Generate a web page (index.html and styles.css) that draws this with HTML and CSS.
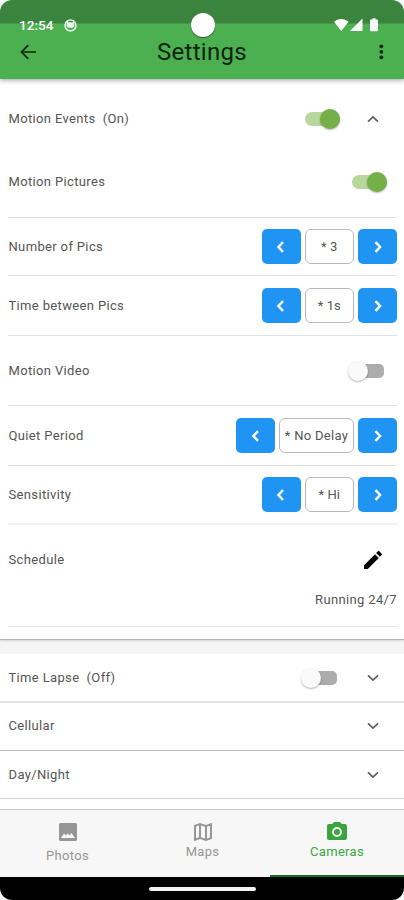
FILE: index.html
```
<!DOCTYPE html>
<html lang="en">
<head>
<meta charset="utf-8">
<title>Settings</title>
<link rel="stylesheet" href="styles.css">
</head>
<body>
<svg class="defs" width="0" height="0">
  <symbol id="left" viewBox="0 0 12 12"><path d="M8 1.200 3.400 6 8 10.800" fill="none" stroke="currentColor" stroke-width="2.400"/></symbol>
  <symbol id="right" viewBox="0 0 12 12"><path d="M3.500 1.200 8.100 6 3.500 10.800" fill="none" stroke="currentColor" stroke-width="2.400"/></symbol>
  <symbol id="down" viewBox="0 0 12 8"><path d="M1 1.300 6 6.100l5-4.800" fill="none" stroke="currentColor" stroke-width="1.600"/></symbol>
  <symbol id="up" viewBox="0 0 12 8"><path d="M1 6.700 6 1.900l5 4.800" fill="none" stroke="currentColor" stroke-width="1.600"/></symbol>
</svg>
<div class="phone">
  <header class="header">
    <div class="status">
      <div class="status-left">
        <span class="clock">12:54</span>
        <svg width="13" height="13" viewBox="0 0 13 13"><circle cx="6.500" cy="6.500" r="5.500" fill="none" stroke="#e6f4e7" stroke-width="1.500"/><path d="M2.600 2l2 1.300h3.800l2-1.300v4.500a3.900 2.300 0 0 1-7.800 0z" fill="#e6f4e7"/></svg>
      </div>
      <span class="punch"></span>
      <svg class="signals" width="44" height="14" viewBox="0 0 44 14" fill="#fff"><path d="M0 3.800C4-.1 10.500-.1 14.500 3.800L7.300 13z"/><path d="M28.500.500V13H16z"/><path d="M37 1.500h1.500V.300h3v1.200H43q1 0 1 1V12q0 1.300-1.300 1.300h-5.400Q36 13.300 36 12V2.500q0-1 1-1z"/></svg>
    </div>
    <div class="bar">
      <svg width="16" height="16" viewBox="0 0 16 16" fill="none" stroke="#0c250e" stroke-width="1.700"><path d="M8.300 1.200 1.500 8l6.800 6.800"/><path d="M16 8H1.800" stroke-width="1.400"/></svg>
      <h1 class="title">Settings</h1>
      <svg width="16" height="16" viewBox="0 0 16 16" fill="#0c250e"><circle cx="9.300" cy="2.300" r="1.900"/><circle cx="9.300" cy="7.800" r="1.900"/><circle cx="9.300" cy="13.300" r="1.900"/></svg>
    </div>
  </header>

  <main class="content">
    <section class="panel">
      <div class="row events"><span class="label">Motion Events &nbsp;(On)</span><span class="switch on"></span><svg class="chev"><use href="#up"/></svg></div>
      <div class="row pictures"><span class="label">Motion Pictures</span><span class="switch on"></span></div>
      <div class="row number"><span class="label">Number of Pics</span>
        <div class="stepper"><button class="step"><svg><use href="#left"/></svg></button><span class="value">* 3</span><button class="step"><svg><use href="#right"/></svg></button></div></div>
      <div class="row"><span class="label">Time between Pics</span>
        <div class="stepper"><button class="step"><svg><use href="#left"/></svg></button><span class="value">* 1s</span><button class="step"><svg><use href="#right"/></svg></button></div></div>
      <div class="row video"><span class="label">Motion Video</span><span class="switch"></span></div>
      <div class="row"><span class="label">Quiet Period</span>
        <div class="stepper"><button class="step"><svg><use href="#left"/></svg></button><span class="value wide">* No Delay</span><button class="step"><svg><use href="#right"/></svg></button></div></div>
      <div class="row sensitivity"><span class="label">Sensitivity</span>
        <div class="stepper"><button class="step"><svg><use href="#left"/></svg></button><span class="value">* Hi</span><button class="step"><svg><use href="#right"/></svg></button></div></div>
      <div class="schedule">
        <div class="schedule-head"><span class="label">Schedule</span>
          <svg class="pencil" viewBox="3 3 18 18"><path d="M3 17.250V21h3.750L17.810 9.940l-3.750-3.750L3 17.250zM20.710 7.040a1 1 0 0 0 0-1.410l-2.340-2.340a1 1 0 0 0-1.410 0l-1.830 1.830 3.750 3.750 1.830-1.830z"/></svg></div>
        <div class="running">Running 24/7</div>
      </div>
    </section>

    <section class="groups">
      <div class="group lapse"><span class="label">Time Lapse &nbsp;(Off)</span><span class="switch"></span><svg class="chev"><use href="#down"/></svg></div>
      <div class="group cellular"><span class="label">Cellular</span><svg class="chev"><use href="#down"/></svg></div>
      <div class="group daynight"><span class="label">Day/Night</span><svg class="chev"><use href="#down"/></svg></div>
    </section>
  </main>

  <nav class="tabs">
    <div class="tab photos">
      <svg width="18" height="18" viewBox="3 3 18 18"><path fill="currentColor" d="M21 19.500V4.500A1.500 1.500 0 0 0 19.500 3h-15A1.500 1.500 0 0 0 3 4.500v15A1.500 1.500 0 0 0 4.500 21h15a1.500 1.500 0 0 0 1.500-1.500zM5 18l3-4.500 2 2 1.800-2.300 1.700 2.300 2-2.500L19 18z"/></svg>
      <span>Photos</span></div>
    <div class="tab">
      <svg width="18" height="18" viewBox="3 3 18 18"><path fill="currentColor" d="M20.500 3l-.16.030L15 5.100 9 3 3.360 4.900a.5.5 0 0 0-.36.480V20.500a.5.5 0 0 0 .66.470L9 18.900l6 2.100 5.640-1.900a.5.5 0 0 0 .36-.480V3.500a.5.5 0 0 0-.5-.5zM10 5.470l4 1.400v11.660l-4-1.400V5.470zM5 6.460l3-1.010v11.700l-3 1.160V6.460zm14 11.080l-3 1.010V6.860l3-1.160v11.840z"/></svg>
      <span>Maps</span></div>
    <div class="tab active">
      <svg width="20" height="18" viewBox="2 2 20 18"><path fill="currentColor" d="M9 2L7.170 4H4a2 2 0 0 0-2 2v12c0 1.100.9 2 2 2h16a2 2 0 0 0 2-2V6a2 2 0 0 0-2-2h-3.170L15 2H9zm3 15a5 5 0 1 1 0-10 5 5 0 0 1 0 10z"/><circle cx="12" cy="12" r="3" fill="currentColor"/></svg>
      <span>Cameras</span></div>
  </nav>
  <footer class="system"><span class="handle"></span></footer>
</div>
</body>
</html>
```
FILE: styles.css
```
* { box-sizing: border-box; }
body { margin: 0; background: #fff; font-family: Roboto, "Liberation Sans", sans-serif; color: #555; }
.defs { position: absolute; }
.phone { width: 404px; height: 900px; display: flex; flex-direction: column; overflow: hidden; border-radius: 12px; background: #fff; }
.phone svg { display: block; flex: none; }

.header { position: relative; z-index: 1; height: 79px; flex: none; background: linear-gradient(#3b843d 0 23px, #4caf50 24px); box-shadow: 0 1px 5px rgba(0,0,0,.4); }
.status { height: 38px; padding: 11px 26px 0 19px; display: grid; grid-template-columns: 172px 24px 1fr; align-items: center; }
.status-left { display: flex; align-items: center; gap: 10px; padding-top: 1px; }
.clock { color: #fff; font-size: 13.6px; font-weight: 500; line-height: 24px; }
.punch { width: 24px; height: 24px; border-radius: 50%; background: #fff; box-shadow: 0 1px 1px rgba(0,0,0,.5); }
.signals { justify-self: end; }
.bar { height: 28px; padding: 0 16px 0 20px; display: flex; align-items: center; justify-content: space-between; }
.title { margin: 0; padding-right: 4px; color: #0c250e; font-size: 24px; line-height: 28px; font-weight: 400; letter-spacing: .3px; }

.content { height: 730px; flex: none; display: flex; flex-direction: column; background: #f5f5f5; gap: 14px; }
.panel { height: 561px; flex: none; background: #fff; padding: 0 7px 0 8px; border-bottom: 1px solid #b5b5b5; box-shadow: 0 1px 2px rgba(0,0,0,.12); }
.row { height: 60px; display: flex; align-items: center; justify-content: space-between; border-bottom: 1px solid #e0e0e0; }
.label, .running, .value { font-size: 13px; line-height: 18px; letter-spacing: .35px; white-space: pre; }
.label { padding-left: .5px; }
.events { height: 68px; padding: 11px 18px 0 0; border: 0; }
.events .switch { margin-left: auto; margin-right: 27px; }
.lapse .switch { margin-left: auto; margin-right: 30px; }
.pictures { height: 71px; padding-right: 10px; }
.number { height: 58px; }
.video { height: 70px; padding-right: 13px; }
.sensitivity { height: 59px; border-bottom: 2px solid #f1f1f1; }
.switch { width: 35px; height: 14px; display: flex; align-items: center; background: #acacac; border-radius: 10px 7px 7px 10px; }
.switch::before { content: ""; width: 20px; height: 20px; flex: none; margin-left: -1px; border-radius: 50%; background: #fafafa; box-shadow: 0 1px 2px rgba(0,0,0,.3); }
.switch.on { justify-content: flex-end; background: #b7d79c; border-radius: 7px; }
.switch.on::before { background: #75af48; }
.chev { width: 12px; height: 8px; color: #5c5c5c; }

.stepper { display: flex; gap: 4px; }
.step { width: 39px; height: 35px; padding: 0; border: 0; border-radius: 5px; background: #2094f3; color: #fff; display: grid; place-items: center; }
.step svg { width: 12px; height: 12px; }
.value { width: 49.4px; height: 35px; border: 1px solid #b8b8b8; border-radius: 6px; display: grid; place-items: center; letter-spacing: .1px; }
.wide { width: 75px; letter-spacing: .3px; }

.schedule { height: 102px; padding-top: 20px; border-bottom: 1px solid #e5e5e5; }
.schedule-head { height: 30px; padding-right: 15px; display: flex; align-items: center; justify-content: space-between; }
.pencil { width: 18px; height: 18px; fill: #000; }
.running { line-height: 49px; text-align: right; }

.groups { flex: 1; background: #fff; }
.group { height: 49px; padding: 0 25px 0 8px; display: flex; align-items: center; justify-content: space-between; }
.lapse { border-bottom: 2px solid #e4e4e4; }
.cellular { height: 48px; padding-bottom: 1px; border-bottom: 1px solid #bbb; }
.daynight { height: 48px; border-bottom: 1px solid #d2d2d2; }

.tabs { height: 68px; flex: none; background: #f7f7f7; border-top: 1px solid #c8c8c8; display: grid; grid-template-columns: 135px 135px 134px; color: #969696; font-size: 13px; line-height: 18px; letter-spacing: .3px; }
.tab { display: flex; flex-direction: column; align-items: center; padding-top: 13px; gap: 2px; }
.photos { gap: 6px; }
.active { padding-top: 12px; gap: 3px; color: #38a63d; border-bottom: 2px solid #186b1e; }
.system { height: 23px; flex: none; background: #000; display: flex; align-items: center; justify-content: center; }
.handle { width: 107px; height: 4px; border-radius: 2px; background: #f2f2f2; }
```
